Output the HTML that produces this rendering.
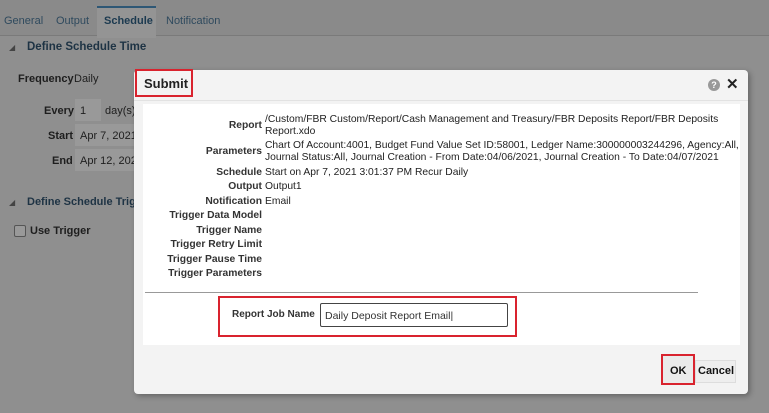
<!DOCTYPE html>
<html><head><style>
body{margin:0;width:769px;height:413px;overflow:hidden;background:#8f8f8f;font-family:"Liberation Sans",Arial,sans-serif;position:relative}
.a{position:absolute;white-space:nowrap}
.tab{font-size:11px;color:#2f4a5e;top:15px}
.lbl{font-weight:bold;font-size:10.3px;color:#333;text-align:right;width:130px;left:132px}
.val{font-size:10.3px;color:#222;left:265px}
.bg{color:#1e1e1e;font-size:11px}
</style></head><body>
<div class="a" style="left:0;top:0;width:769px;height:35px;background:#8a8a8a;border-bottom:1px solid #7a7a7a"></div>
<div class="a" style="left:97px;top:6px;width:59px;height:30px;background:#949494;border-top:2px solid #2e5775"></div>
<div class="a tab" style="left:4px">General</div>
<div class="a tab" style="left:56px">Output</div>
<div class="a tab" style="left:104px;font-weight:bold;color:#1c3a50">Schedule</div>
<div class="a tab" style="left:166px">Notification</div>
<div class="a" style="left:9px;top:43px;font-size:8px;color:#444">◢</div>
<div class="a" style="left:27px;top:41px;font-size:11.5px;font-weight:bold;color:#1e3344">Define Schedule Time</div>
<div class="a bg" style="left:18px;top:73px;font-weight:bold">Frequency</div>
<div class="a bg" style="left:74px;top:73px">Daily</div>
<div class="a bg" style="left:44px;top:105px;font-weight:bold">Every</div>
<div class="a" style="left:75px;top:99px;width:26px;height:22px;background:#999"></div>
<div class="a bg" style="left:80px;top:105px">1</div>
<div class="a bg" style="left:105px;top:105px">day(s)</div>
<div class="a bg" style="left:48px;top:130px;font-weight:bold">Start</div>
<div class="a" style="left:75px;top:124px;width:60px;height:22px;background:#999"></div>
<div class="a bg" style="left:80px;top:130px">Apr 7, 2021</div>
<div class="a bg" style="left:52px;top:155px;font-weight:bold">End</div>
<div class="a" style="left:75px;top:149px;width:60px;height:22px;background:#999"></div>
<div class="a bg" style="left:80px;top:155px">Apr 12, 202</div>
<div class="a" style="left:9px;top:198px;font-size:8px;color:#444">◢</div>
<div class="a" style="left:27px;top:196px;font-size:11px;font-weight:bold;color:#1e3344">Define Schedule Trigg</div>
<div class="a" style="left:14px;top:225px;width:10px;height:10px;border:1px solid #555;border-radius:2px;background:#999"></div>
<div class="a bg" style="left:30px;top:225px;font-weight:bold">Use Trigger</div>

<div class="a" style="left:134px;top:70px;width:614px;height:324px;background:#f3f3f3;border-radius:4px;box-shadow:2px 2px 6px rgba(0,0,0,.3)"></div>
<div class="a" style="left:134px;top:100px;width:614px;height:1px;background:#e2e2e2"></div>
<div class="a" style="left:143px;top:104px;width:597px;height:241px;background:#fff"></div>
<div class="a" style="left:135px;top:69px;width:58px;height:28px;border:2px solid #d9232e;box-sizing:border-box"></div>
<div class="a" style="left:144px;top:76px;font-size:13px;font-weight:bold;color:#222">Submit</div>
<div class="a" style="left:708px;top:79px;width:12px;height:12px;border-radius:50%;background:#999;color:#fff;font-size:9px;font-weight:bold;text-align:center;line-height:12px">?</div>
<div class="a" style="left:726px;top:75px;font-size:15px;font-weight:bold;color:#222">✕</div>

<div class="a lbl" style="top:120px">Report</div>
<div class="a val" style="top:114px;line-height:12px">/Custom/FBR Custom/Report/Cash Management and Treasury/FBR Deposits Report/FBR Deposits<br>Report.xdo</div>
<div class="a lbl" style="top:146px">Parameters</div>
<div class="a val" style="top:140px;line-height:12px">Chart Of Account:4001, Budget Fund Value Set ID:58001, Ledger Name:300000003244296, Agency:All,<br>Journal Status:All, Journal Creation - From Date:04/06/2021, Journal Creation - To Date:04/07/2021</div>
<div class="a lbl" style="top:167px">Schedule</div>
<div class="a val" style="top:167px">Start on Apr 7, 2021 3:01:37 PM Recur Daily</div>
<div class="a lbl" style="top:181px">Output</div>
<div class="a val" style="top:181px">Output1</div>
<div class="a lbl" style="top:196px">Notification</div>
<div class="a val" style="top:196px">Email</div>
<div class="a lbl" style="top:210px">Trigger Data Model</div>
<div class="a lbl" style="top:225px">Trigger Name</div>
<div class="a lbl" style="top:239px">Trigger Retry Limit</div>
<div class="a lbl" style="top:254px">Trigger Pause Time</div>
<div class="a lbl" style="top:268px">Trigger Parameters</div>
<div class="a" style="left:145px;top:292px;width:553px;height:1px;background:#999"></div>

<div class="a" style="left:218px;top:296px;width:299px;height:41px;border:2px solid #d9232e;box-sizing:border-box"></div>
<div class="a" style="left:232px;top:309px;font-size:10px;font-weight:bold;color:#333">Report Job Name</div>
<div class="a" style="left:320px;top:303px;width:188px;height:24px;border:1px solid #444;border-radius:2px;box-sizing:border-box;background:#fff"></div>
<div class="a" style="left:325px;top:310px;font-size:10.5px;color:#333">Daily Deposit Report Email|</div>

<div class="a" style="left:663px;top:356px;width:30px;height:27px;background:#eaeaea"></div>
<div class="a" style="left:661px;top:354px;width:34px;height:31px;border:2px solid #d9232e;box-sizing:border-box"></div>
<div class="a" style="left:670px;top:365px;font-size:11px;font-weight:bold;color:#111">OK</div>
<div class="a" style="left:695px;top:360px;width:41px;height:23px;background:#eee;border:1px solid #ddd;box-sizing:border-box"></div>
<div class="a" style="left:698px;top:365px;font-size:11px;font-weight:bold;color:#111">Cancel</div>
</body></html>
